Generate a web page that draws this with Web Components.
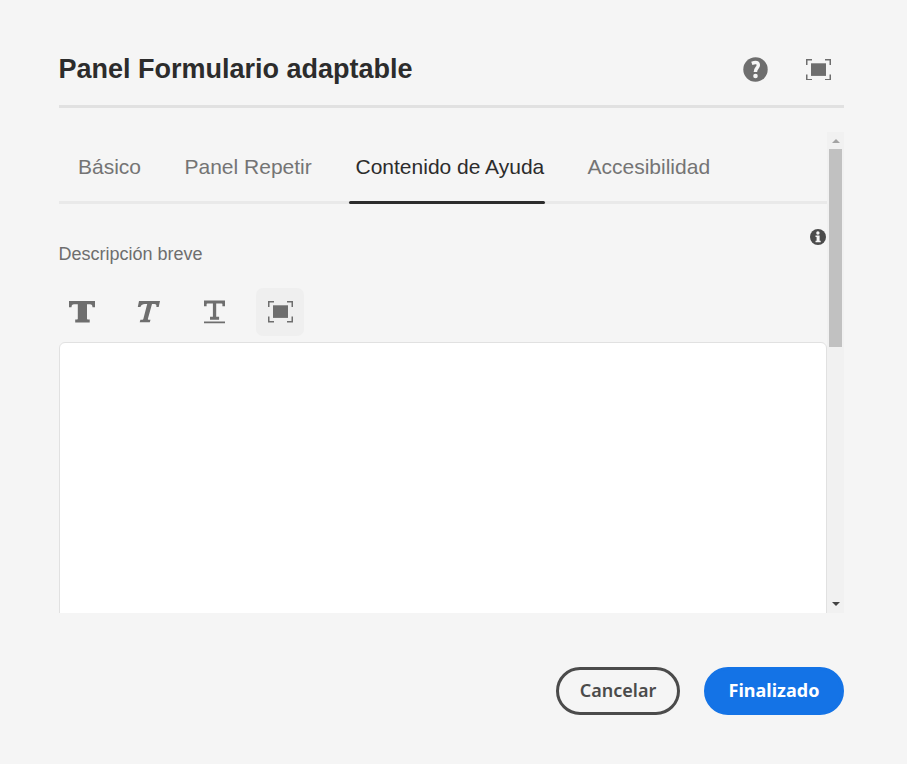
<!DOCTYPE html>
<html lang="es"><head><meta charset="utf-8"><title>Panel Formulario adaptable</title>
<style>html,body{margin:0;height:100%;overflow:hidden;background:#f5f5f5}body{font-family:"Liberation Sans",Arial,sans-serif}</style></head>
<body><panel-dialog></panel-dialog>
<script>
const frame = `<path d="M.75 6V.75H6M19 .75h5.25V6M24.25 15.5v5.25H19M6 20.75H.75V15.5" fill="none" stroke="currentColor" stroke-width="1.5"/><path d="M5 4.3h15v12.6H5z" fill="currentColor"/>`;
const icons = {
 full:[25,21.5,frame],
 help:[25,25,`<circle cx="12.5" cy="12.5" r="12.2" fill="currentColor"/><path d="M8.8 6.3Q15.3 4 15.3 8.2C15.3 10.8 12.4 11.2 12.4 14.9" fill="none" stroke="#f5f5f5" stroke-width="3.5"/><circle cx="12.5" cy="19" r="2.3" fill="#f5f5f5"/>`],
 info:[16,16,`<circle cx="8" cy="8" r="8" fill="currentColor"/><circle cx="7.9" cy="4" r="1.7" fill="#f5f5f5"/><path d="M5.5 6.5h4.1v5.2h1.1v1.6H5.5v-1.6h1.1V8.1H5.5z" fill="#f5f5f5"/>`],
 bold:[26,22,`<path d="M0 0h26v6.2h-2.5C23.3 4 22.8 3.3 21 3.3h-3v14.5q0 .7.8.7h1.9V21.4H6.2v-2.9H8q.8 0 .8-.7V3.3H5C3.2 3.3 2.7 4 2.5 6.2H0z" fill="currentColor"/>`],
 italic:[23,22,`<path d="M2 0H23L21.7 6h-2.3C19.6 3.7 19.2 3 17.4 3h-2.4L10.9 17.8q-.2.9.6.9h2l-.7 2.6H2.7l.7-2.6h1.9q.9 0 1.1-.9L10.2 3H8C5.5 3 4.4 3.8 3.4 6H.8z" fill="currentColor"/>`],
 under:[21,24,`<path d="M0 .4h21V6.2h-2.6V4q0-.6-.8-.6h-5.4v13.4h2.9v2.9H6v-2.9h2.9V3.4H3.4q-.8 0-.8.6v2.2H0zM0 21.5h21v1.7H0z" fill="currentColor"/>`]
};
function define(name, css, html){
 customElements.define(name, class extends HTMLElement{
  constructor(){super();this.attachShadow({mode:"open"}).innerHTML=`<style>*{box-sizing:border-box}${css}</style>${html}`;}
 });
}
customElements.define("ui-icon", class extends HTMLElement{
 connectedCallback(){
  const [w,h,body]=icons[this.getAttribute("name")];
  this.attachShadow({mode:"open"}).innerHTML=`<style>:host{display:block;color:#6e6e6e;flex:none}svg{display:block}</style><svg width="${w}" height="${h}" viewBox="0 0 ${w} ${h}">${body}</svg>`;
 }
});
define("dialog-header",`:host{display:flex;align-items:center;height:60px;border-bottom:3px solid #e1e1e1;color:#2c2c2c;padding:0 13px 14px 0;box-sizing:border-box}
h1{font:bold 27px/32px "Liberation Sans",Arial,sans-serif;margin:0 auto 0 -.5px;padding-bottom:2px;white-space:nowrap}div{display:flex;align-items:center;gap:38px}`,
`<h1><slot></slot></h1><div><slot name="actions"></slot></div>`);
define("tab-item",`:host{display:block;height:72px;padding:23px 0 0 7px;font-size:21px;line-height:24px;color:#747474;position:relative;white-space:nowrap;box-sizing:border-box}
:host([selected]){color:#2c2c2c}:host([selected])::after{content:"";position:absolute;left:0;right:0;bottom:0;height:3px;border-radius:2px;background:#2c2c2c}`,`<slot></slot>`);
define("tab-bar",`:host{display:grid;grid-template-columns:106.5px 171px 196px 1fr;column-gap:0;padding-left:12px;height:72px;background:linear-gradient(#e9e9e9,#e9e9e9) bottom/100% 3px no-repeat;box-sizing:border-box}
::slotted(:nth-child(4)){margin-left:36px}`,`<slot></slot>`);
define("tool-button",`:host{display:flex;width:48px;height:48px;align-items:center;justify-content:center;border-radius:7px}:host([active]){background:#efefef}`,`<slot></slot>`);
define("field-label",`:host{display:flex;justify-content:space-between;height:84px;padding-top:24.5px;font-size:18px;line-height:20px;color:#6e6e6e;box-sizing:border-box}span{padding-top:15.5px;margin-left:-.5px}
ui-icon{color:#4b4b4b;margin-right:1px}`,`<span><slot></slot></span><ui-icon name="info"></ui-icon>`);
define("text-editor",`:host{display:block}nav{display:flex;gap:18px;margin-left:-1px;height:54px;align-items:flex-start}section{height:290px;background:#fff;border:1px solid #e1e1e1;border-radius:6px}`,
`<nav><slot></slot></nav><section></section>`);
define("scroll-track",`:host{display:flex;flex-direction:column;width:17px;background:#f1f1f1;align-items:center;justify-content:space-between;box-sizing:border-box;padding-bottom:7px}
.top{height:215px;width:13px;display:flex;flex-direction:column;align-items:center;padding-top:7px}.thumb{width:13px;height:198px;margin-top:6px;background:#c1c1c1}svg{display:block;flex:none}`,
`<div class="top"><svg width="8" height="4"><path d="M0 4L4 0 8 4z" fill="#a3a3a3"/></svg><div class="thumb"></div></div><svg width="8" height="4"><path d="M0 0h8L4 4z" fill="#444"/></svg>`);
define("scroll-panel",`:host{display:grid;grid-template-columns:768px 17px;height:481px;margin-top:24px;overflow:hidden}div{overflow:hidden;height:481px}`,
`<div><slot></slot></div><scroll-track></scroll-track>`);
define("pill-button",`:host{display:flex;box-sizing:border-box;height:48px;border:3px solid #4b4b4b;border-radius:24px;width:124px;align-items:center;justify-content:center;font:600 18px/24px "Noto Sans","Open Sans",sans-serif;color:#4b4b4b;padding-bottom:3px}
:host([primary]){width:140px;background:#1473e6;border-color:#1473e6;color:#fff;font-weight:700}`,`<slot></slot>`);
define("panel-dialog",`:host{display:block;box-sizing:border-box;width:907px;height:764px;padding:48px 63px 0 59px;background:#f5f5f5}footer{display:flex;justify-content:flex-end;gap:24px;margin-top:54px}`,
`<dialog-header>Panel Formulario adaptable<ui-icon slot="actions" name="help"></ui-icon><ui-icon slot="actions" name="full"></ui-icon></dialog-header>
<scroll-panel><tab-bar><tab-item>Básico</tab-item><tab-item>Panel Repetir</tab-item><tab-item selected>Contenido de Ayuda</tab-item><tab-item>Accesibilidad</tab-item></tab-bar>
<field-label>Descripción breve</field-label>
<text-editor><tool-button><ui-icon name="bold"></ui-icon></tool-button><tool-button><ui-icon name="italic"></ui-icon></tool-button><tool-button><ui-icon name="under"></ui-icon></tool-button><tool-button active><ui-icon name="full"></ui-icon></tool-button></text-editor></scroll-panel>
<footer><pill-button>Cancelar</pill-button><pill-button primary>Finalizado</pill-button></footer>`);
</script></body></html>
